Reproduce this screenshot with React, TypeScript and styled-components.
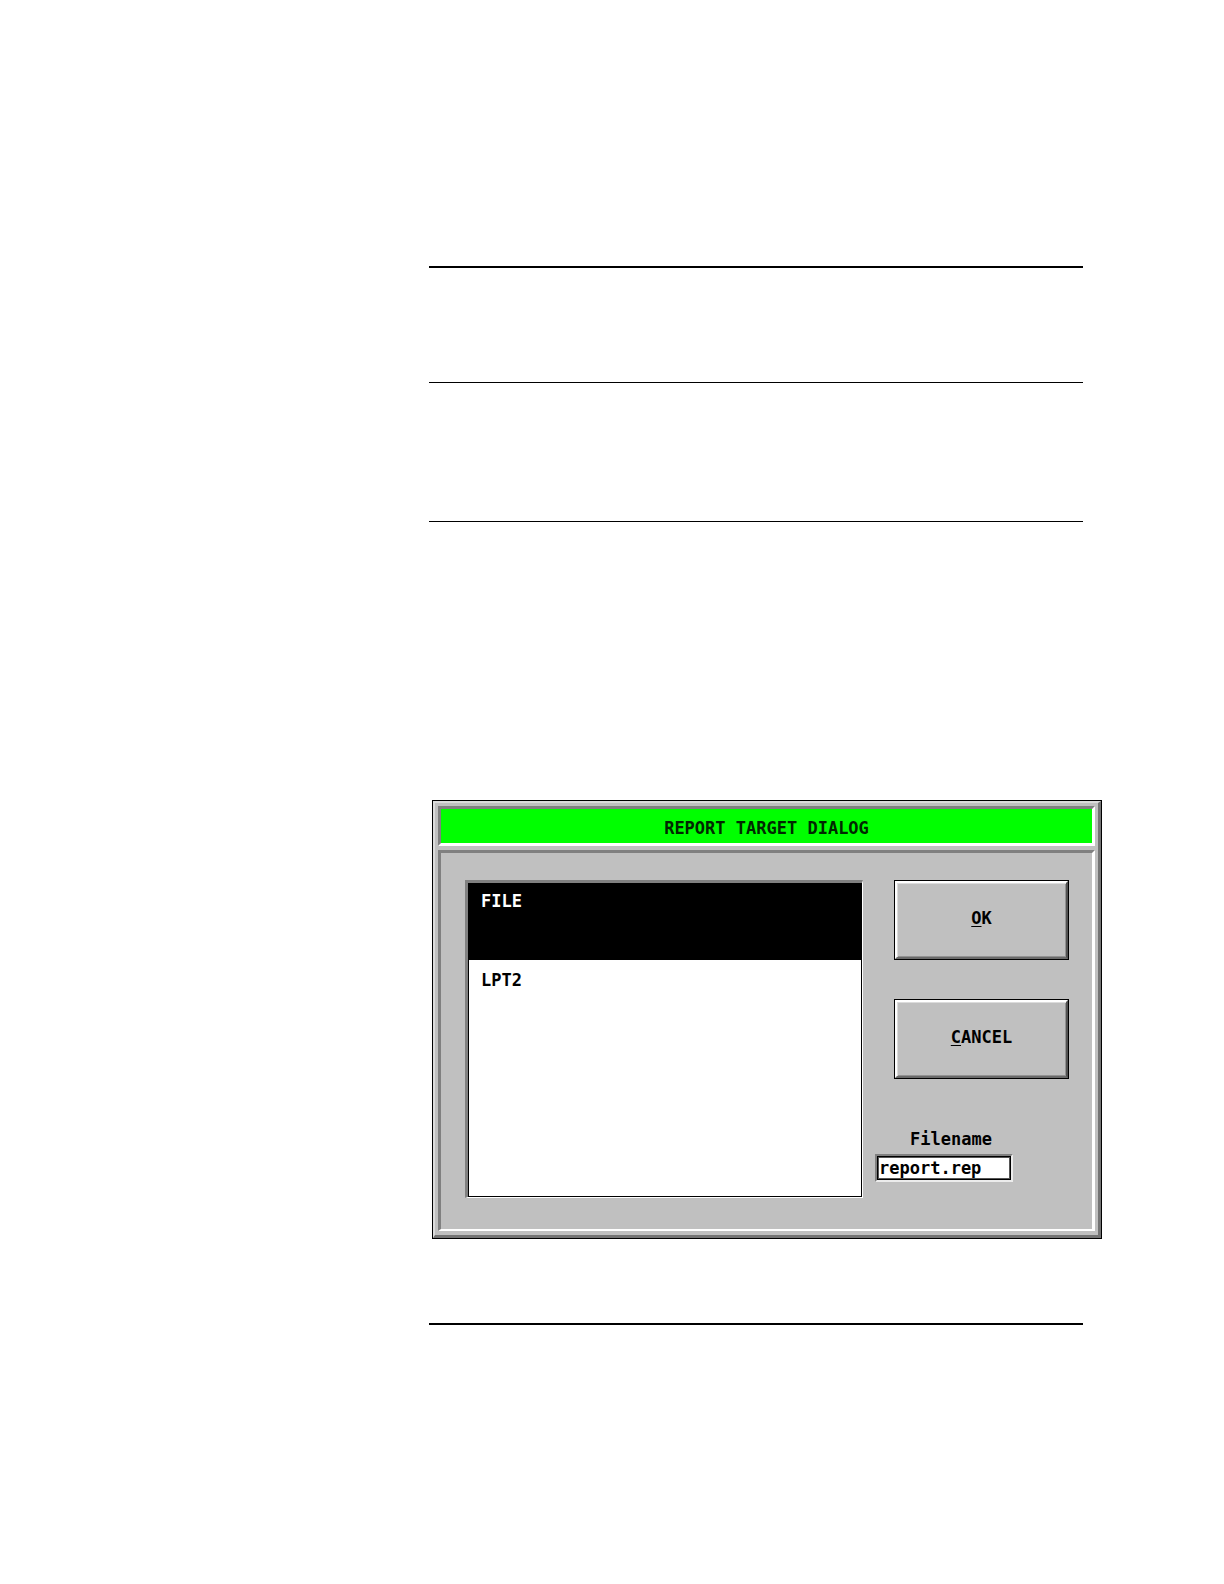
import React, { useState } from "react";
import styled, { createGlobalStyle } from "styled-components";

const GlobalStyle = createGlobalStyle`
  *, *::before, *::after { box-sizing: border-box; }
  body { margin: 0; background: #fff; }
`;

const mono = `bold 17px/20px "DejaVu Sans Mono", "Liberation Mono", monospace`;

const Page = styled.main`
  padding: 266px 122px 259px 429px;
  color: #000;
  font: ${mono};
`;

const Rule = styled.hr<{ $thick?: boolean; $after: number }>`
  height: ${(p) => (p.$thick ? 2 : 1)}px;
  margin: 0 19px ${(p) => p.$after}px 0;
  border: 0;
  background: #000;
`;

const DialogFrame = styled.section`
  margin: 0 0 84px 3px;
  border: 1px solid #000;
`;

const DialogSurface = styled.div`
  display: flex;
  flex-direction: column;
  gap: 4px;
  padding: 3px 3px 4px;
  border-style: solid;
  border-width: 2px 3px 3px 2px;
  border-color: #dcdcdc #747474 #747474 #dcdcdc;
  background: #c0c0c0;
`;

const TitleBar = styled.h1`
  margin: 0;
  padding: 9px 0 5px;
  border: 3px solid;
  border-color: #808080 #fff #fff #808080;
  background: #0f0;
  color: #002800;
  font: ${mono};
  text-align: center;
`;

const DialogBody = styled.form`
  display: grid;
  grid-template-columns: minmax(0, 1fr) 194px;
  gap: 12px;
  padding: 27px 23px 31px 24px;
  border-style: solid;
  border-width: 3px 3px 2px;
  border-color: #808080 #fff #fff #808080;
`;

const ListFrame = styled.div`
  display: flex;
  border-style: solid;
  border-width: 3px 1px 1px 3px;
  border-color: #808080 #fff #fff #808080;
`;

const TargetList = styled.div`
  flex: 1;
  display: flex;
  flex-direction: column;
  gap: 2px;
  min-height: 314px;
  border: 1px solid #000;
  border-top: 0;
  background: #fff;
`;

const TargetOption = styled.button<{ $selected: boolean }>`
  height: 77px;
  padding: 8px 12px;
  display: flex;
  align-items: flex-start;
  border: 0;
  background: ${(p) => (p.$selected ? "#000" : "#fff")};
  color: ${(p) => (p.$selected ? "#fff" : "#000")};
  font: inherit;
  text-align: left;
`;

const Controls = styled.div`
  display: flex;
  flex-direction: column;
`;

const PushButton = styled.button`
  display: flex;
  height: 80px;
  margin: 0 0 39px 19px;
  padding: 0;
  border: 1px solid #000;
  background: #c0c0c0;
  color: #000;
  font: inherit;
`;

const ButtonFace = styled.span`
  flex: 1;
  align-self: stretch;
  display: flex;
  align-items: center;
  justify-content: center;
  padding-bottom: 4px;
  border-style: solid;
  border-width: 2px;
  border-color: #fff #505050 #6a6a6a #fff;
  box-shadow: inset 1px 1px #dcdcdc, inset -1px -1px #929292;
`;

const Mnemonic = styled.span`
  text-decoration: underline;
  text-decoration-thickness: 1px;
  text-underline-offset: 2px;
`;

const FieldLabel = styled.label`
  margin: 11px 0 5px 35px;
`;

const FieldFrame = styled.div`
  display: flex;
  width: 138px;
  border-style: solid;
  border-width: 2px;
  border-color: #808080 #ececec #ececec #808080;
`;

const FieldInput = styled.input`
  flex: 1;
  min-width: 0;
  height: 24px;
  padding: 0 1px;
  border: 1px solid #000;
  border-radius: 0;
  outline: 1px solid #555;
  outline-offset: -2px;
  background: #fff;
  color: #000;
  font: inherit;
`;

const targets = ["FILE", "LPT2"];

export default function App() {
  const [target, setTarget] = useState("FILE");
  const [filename, setFilename] = useState("report.rep");

  return (
    <>
      <GlobalStyle />
      <Page>
        <Rule $thick $after={114} />
        <Rule $after={138} />
        <Rule $after={278} />
        <DialogFrame role="dialog" aria-labelledby="dialog-title">
          <DialogSurface>
            <TitleBar id="dialog-title">REPORT TARGET DIALOG</TitleBar>
            <DialogBody onSubmit={(e) => e.preventDefault()}>
              <ListFrame>
                <TargetList role="listbox" aria-labelledby="dialog-title">
                  {targets.map((name) => (
                    <TargetOption
                      key={name}
                      type="button"
                      role="option"
                      aria-selected={name === target}
                      $selected={name === target}
                      onClick={() => setTarget(name)}
                    >
                      {name}
                    </TargetOption>
                  ))}
                </TargetList>
              </ListFrame>
              <Controls>
                <PushButton type="submit">
                  <ButtonFace>
                    <Mnemonic>O</Mnemonic>K
                  </ButtonFace>
                </PushButton>
                <PushButton type="button">
                  <ButtonFace>
                    <Mnemonic>C</Mnemonic>ANCEL
                  </ButtonFace>
                </PushButton>
                <FieldLabel htmlFor="filename">Filename</FieldLabel>
                <FieldFrame>
                  <FieldInput
                    id="filename"
                    type="text"
                    value={filename}
                    onChange={(e) => setFilename(e.target.value)}
                  />
                </FieldFrame>
              </Controls>
            </DialogBody>
          </DialogSurface>
        </DialogFrame>
        <Rule $thick $after={0} />
      </Page>
    </>
  );
}
